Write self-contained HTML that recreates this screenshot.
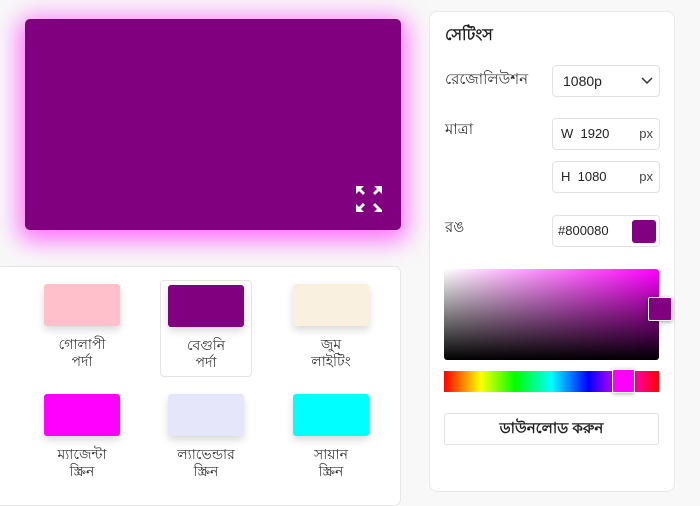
<!DOCTYPE html>
<html><head><meta charset="utf-8"><style>
*{box-sizing:border-box;margin:0;padding:0}
body{width:700px;height:499px;overflow:hidden;background:#f8f8f8;font-family:"Liberation Sans","Noto Sans CJK SC",sans-serif;color:#222;position:relative}
.prev{position:absolute;left:25px;top:19px;width:376px;height:211px;background:#800080;border-radius:5px;box-shadow:0 5px 24px 6px rgba(255,0,255,.55)}
.sw{position:absolute;left:-10px;top:266px;width:411px;height:240px;background:#fff;border:1px solid #e6e6e6;border-radius:7px}
.it{position:absolute;width:92px;text-align:center;font-size:14px;line-height:17px;color:#333}
.it .c{width:76px;height:42px;margin:4px auto 10px;border-radius:3px;box-shadow:0 4px 8px rgba(0,0,0,.15)}
.sel{border:1px solid #e4e4e4;border-radius:4px;height:97px}
.set{position:absolute;left:429px;top:11px;width:246px;height:481px;background:#fff;border:1px solid #e8e8e8;border-radius:8px}
.lab{position:absolute;left:15px;font-size:15px;color:#333}
.inp{position:absolute;left:122px;width:108px;height:32px;border:1px solid #e2e2e2;border-radius:4px;font-size:13px;padding:0 8px;line-height:30px;color:#222}
.px{position:absolute;right:6px;top:0;color:#444}
</style></head><body>
<div class="prev">
<svg style="position:absolute;left:330px;top:166px" width="28" height="28" viewBox="0 0 28 28" fill="#fff"><path d="M1 1h8l-3 3 4 4-2 2-4-4-3 3z"/><path d="M27 1h-8l3 3-4 4 2 2 4-4 3 3z"/><path d="M1 27h8l-3-3 4-4-2-2-4 4-3-3z"/><path d="M27 27h-8l3-3-4-4 2-2 4 4 3 3z"/></svg>
</div>
<div class="sw">
<div class="it" style="left:45px;top:13px"><div class="c" style="background:#ffc0cb"></div>গোলাপী<br>পর্দা</div>
<div class="it sel" style="left:169px;top:13px"><div class="c" style="background:#800080"></div>বেগুনি<br>পর্দা</div>
<div class="it" style="left:294px;top:13px"><div class="c" style="background:#faf0e0"></div>জুম<br>লাইটিং</div>
<div class="it" style="left:45px;top:123px"><div class="c" style="background:#ff00ff"></div>ম্যাজেন্টা<br>স্ক্রিন</div>
<div class="it" style="left:169px;top:123px"><div class="c" style="background:#e6e6fa"></div>ল্যাভেন্ডার<br>স্ক্রিন</div>
<div class="it" style="left:294px;top:123px"><div class="c" style="background:#00ffff"></div>সায়ান<br>স্ক্রিন</div>
</div>
<div class="set">
<div class="lab" style="top:10px;font-weight:bold;font-size:16px;color:#222">সেটিংস</div>
<div class="lab" style="top:56px">রেজোলিউশন</div>
<div class="inp" style="top:53px;font-size:14px;padding-left:10px">1080p<svg style="position:absolute;right:6px;top:11px" width="12" height="8" viewBox="0 0 12 8"><path d="M1 1l5 5 5-5" stroke="#333" stroke-width="1.5" fill="none"/></svg></div>
<div class="lab" style="top:106px">মাত্রা</div>
<div class="inp" style="top:106px">W&nbsp; 1920<span class="px">px</span></div>
<div class="inp" style="top:149px">H&nbsp; 1080<span class="px">px</span></div>
<div class="lab" style="top:204px">রঙ</div>
<div class="inp" style="top:203px;padding-left:5px">#800080<span style="position:absolute;right:3px;top:4px;width:24px;height:23px;background:#800080;border-radius:3px"></span></div>
<div style="position:absolute;left:14px;top:257px;width:215px;height:91px;border-radius:3px;background:linear-gradient(to bottom,rgba(0,0,0,0),#000),linear-gradient(to right,#fff,#f0f)"></div>
<div style="position:absolute;left:218px;top:285px;width:24px;height:24px;background:#800080;border:1px solid #fff;border-radius:2px;box-shadow:0 1px 4px rgba(0,0,0,.4)"></div>
<div style="position:absolute;left:14px;top:359px;width:215px;height:21px;background:linear-gradient(to right,#f00,#ff0 17%,#0f0 33%,#0ff 50%,#00f 67%,#f0f 83%,#f00)"></div>
<div style="position:absolute;left:182px;top:357px;width:23px;height:24px;background:#f0f;border:1px solid #fff;border-radius:2px;box-shadow:0 1px 4px rgba(0,0,0,.3)"></div>
<div style="position:absolute;left:14px;top:401px;width:215px;height:32px;border:1px solid #e2e2e2;border-radius:3px;text-align:center;line-height:30px;font-weight:bold;font-size:15px;color:#222">ডাউনলোড করুন</div>
</div>
</body></html>
